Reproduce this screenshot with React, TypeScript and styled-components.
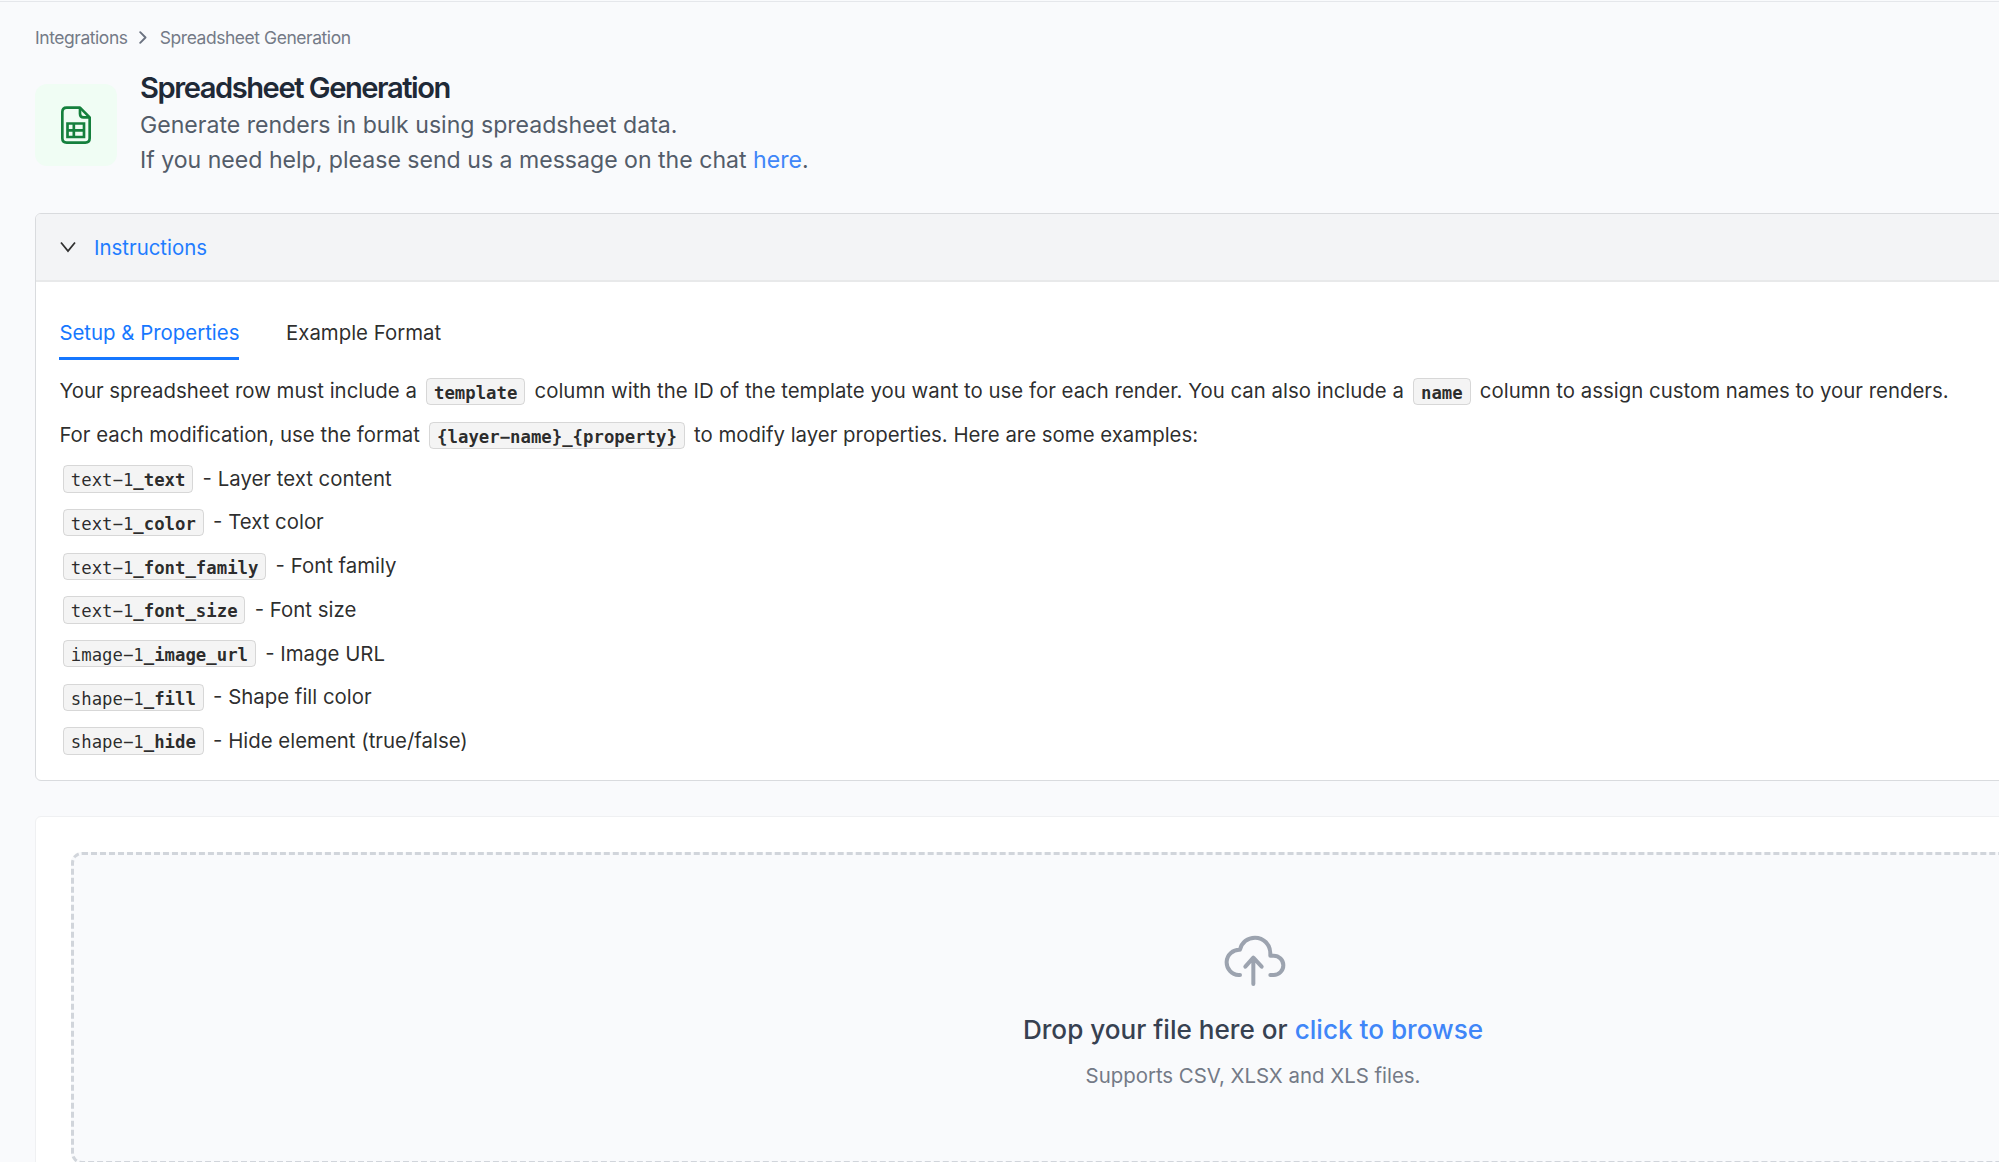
import React from "react";
import styled, { createGlobalStyle } from "styled-components";

const GlobalStyle = createGlobalStyle`
  *, *::before, *::after { box-sizing: border-box; }
  body {
    margin: 0;
    background: #f9fafc;
    overflow: hidden;
    font-family: Inter, "Liberation Sans", sans-serif;
    -webkit-font-smoothing: antialiased;
  }
`;

const Viewport = styled.div`
  height: 1162px;
  overflow: hidden;
  padding-top: 1px;
`;

const Page = styled.main`
  width: 2506px;
  border-top: 1px solid #e5e7eb;
  padding: 22px 35px 0;
  display: flex;
  flex-direction: column;
`;

const Breadcrumb = styled.nav`
  display: flex;
  align-items: center;
  height: 26px;
  font-size: 17.48px;
  letter-spacing: -0.025em;
  color: #747a87;
  white-space: nowrap;
`;

const CrumbArrow = styled.svg`
  width: 8px;
  height: 13px;
  margin: 0 12.4px 0 11.8px;
  color: #6b7280;
`;

const Header = styled.header`
  display: flex;
  align-items: flex-start;
  gap: 23px;
  margin-top: 17px;
  height: 146px;
`;

const IconTile = styled.div`
  width: 82px;
  height: 82px;
  margin-top: 17px;
  border-radius: 12px;
  background: #f0fdf4;
  color: #15803d;
`;

const HeaderText = styled.div`
  display: flex;
  flex-direction: column;
`;

const Title = styled.h1`
  margin: 0;
  font-size: 29.14px;
  line-height: 41px;
  font-weight: 600;
  letter-spacing: -0.05em;
  color: #1f2937;
`;

const Description = styled.p`
  margin: 0;
  font-size: 23.08px;
  line-height: 35px;
  color: #535c69;
`;

const Link = styled.a`
  color: #4086f8;
`;

const Collapse = styled.section`
  height: 568px;
  border: 1px solid #d9dbde;
  border-radius: 6px;
  background: #fff;
  overflow: hidden;
`;

const CollapseHeader = styled.div`
  display: flex;
  align-items: center;
  gap: 18px;
  height: 68px;
  padding: 0 24px;
  background: #f3f4f6;
  border-bottom: 2px solid #e8e9ea;
  font-size: 20.4px;
  color: #1f7cff;
`;

const CollapseArrow = styled.svg`
  width: 16px;
  height: 12px;
  color: rgba(0, 0, 0, 0.8);
`;

const CollapseBody = styled.div`
  padding: 23px 23.4px 0;
  font-size: 20.4px;
  color: rgba(0, 0, 0, 0.84);
`;

const Tabs = styled.div`
  display: flex;
  gap: 46.6px;
`;

const Tab = styled.div<{ $active?: boolean }>`
  display: flex;
  align-items: center;
  height: 55px;
  padding-top: 3px;
  border-bottom: 3px solid ${(p) => (p.$active ? "#1677ff" : "transparent")};
  color: ${(p) => (p.$active ? "#1677ff" : "inherit")};
`;

const Lines = styled.div`
  display: flex;
  flex-direction: column;
  gap: 11.7px;
  margin-top: 15.4px;
`;

const Line = styled.p`
  margin: 0;
  height: 32px;
  line-height: 32px;
  white-space: nowrap;
`;

const Code = styled.code`
  margin: 0 3.5px;
  padding: 3.5px 6.9px 1.8px;
  border: 1px solid rgba(100, 100, 100, 0.2);
  border-radius: 4.4px;
  background: rgba(150, 150, 150, 0.1);
  font-family: "DejaVu Sans Mono", monospace;
  font-size: 17.32px;
`;

const UploadCard = styled.section`
  margin-top: 35px;
  padding: 35px;
  border: 1px solid #eff0f2;
  border-radius: 6px;
  background: #fff;
`;

const DropZone = styled.div`
  display: flex;
  flex-direction: column;
  align-items: center;
  height: 312px;
  padding-top: 70px;
  border: 3px dashed #d1d5db;
  border-radius: 11px;
  background: #f9fafc;
`;

const CloudIcon = styled.svg`
  width: 70px;
  height: 70px;
  color: #9ca3af;
`;

const DropTitle = styled.p`
  margin: 15px 0 0;
  font-size: 26.14px;
  line-height: 40px;
  font-weight: 500;
  color: #374151;
`;

const DropHint = styled.p`
  margin: 11px 0 0;
  font-size: 20.4px;
  line-height: 30px;
  color: #747a87;
`;

const PROPERTIES = [
  { layer: "text-1", property: "_text", label: "Layer text content" },
  { layer: "text-1", property: "_color", label: "Text color" },
  { layer: "text-1", property: "_font_family", label: "Font family" },
  { layer: "text-1", property: "_font_size", label: "Font size" },
  { layer: "image-1", property: "_image_url", label: "Image URL" },
  { layer: "shape-1", property: "_fill", label: "Shape fill color" },
  { layer: "shape-1", property: "_hide", label: "Hide element (true/false)" },
];

// The code font's hyphen is short; a minus sign gives the wide dash.
const wide = (s: string) => s.replace("-", "\u2212");

const SheetIcon = () => (
  <svg width="82" height="82" viewBox="15 12 246 246" fill="none" stroke="currentColor" strokeWidth="8">
    <path d="M150 83H110Q97 83 97 96V175Q97 188 110 188H166Q179 188 179 175V112Z" strokeLinejoin="round" />
    <path d="M150 83V101Q150 112 161 112H179" strokeLinejoin="round" />
    <path d="M112.500 130.500H162V171H112.500ZM131.500 130.500V171M112.500 151H162" />
  </svg>
);

export default function App() {
  return (
    <Viewport>
      <GlobalStyle />
      <Page>
        <Breadcrumb>
          <span>Integrations</span>
          <CrumbArrow viewBox="0 0 8 13" fill="none" stroke="currentColor" strokeWidth="1.9" strokeLinecap="round" strokeLinejoin="round">
            <path d="M1.200 1.200L6.500 6.500L1.200 11.800" />
          </CrumbArrow>
          <span>Spreadsheet Generation</span>
        </Breadcrumb>
        <Header>
          <IconTile>
            <SheetIcon />
          </IconTile>
          <HeaderText>
            <Title>Spreadsheet Generation</Title>
            <Description>Generate renders in bulk using spreadsheet data.</Description>
            <Description>
              If you need help, please send us a message on the chat <Link>here</Link>.
            </Description>
          </HeaderText>
        </Header>
        <Collapse>
          <CollapseHeader>
            <CollapseArrow viewBox="0 0 16 12" fill="none" stroke="currentColor" strokeWidth="1.8">
              <path d="M1 1.500L8 10L15 1.500" />
            </CollapseArrow>
            <span>Instructions</span>
          </CollapseHeader>
          <CollapseBody>
            <Tabs>
              <Tab $active>Setup &amp; Properties</Tab>
              <Tab>Example Format</Tab>
            </Tabs>
            <Lines>
              <Line>
                Your spreadsheet row must include a <Code><b>template</b></Code> column with the ID of the template
                you want to use for each render. You can also include a <Code><b>name</b></Code> column to assign
                custom names to your renders.
              </Line>
              <Line>
                For each modification, use the format <Code><b>{wide("{layer-name}_{property}")}</b></Code> to modify
                layer properties. Here are some examples:
              </Line>
              {PROPERTIES.map((p) => (
                <Line key={p.layer + p.property}>
                  <Code>
                    {wide(p.layer)}
                    <b>{p.property}</b>
                  </Code>{" "}
                  - {p.label}
                </Line>
              ))}
            </Lines>
          </CollapseBody>
        </Collapse>
        <UploadCard>
          <DropZone>
            <CloudIcon viewBox="9 0 210 210" fill="none" stroke="currentColor" strokeWidth="12" strokeLinecap="round" strokeLinejoin="round">
              <path d="M75 150H71A38 38 0 0 1 75 74C80 52 98 38 120 38C146 38 166 59 166 85V92H176A29 29 0 0 1 176 150H166" />
              <path d="M115 177V98M91 125L115 98L140 125" />
            </CloudIcon>
            <DropTitle>
              Drop your file here or <Link>click to browse</Link>
            </DropTitle>
            <DropHint>Supports CSV, XLSX and XLS files.</DropHint>
          </DropZone>
        </UploadCard>
      </Page>
    </Viewport>
  );
}
